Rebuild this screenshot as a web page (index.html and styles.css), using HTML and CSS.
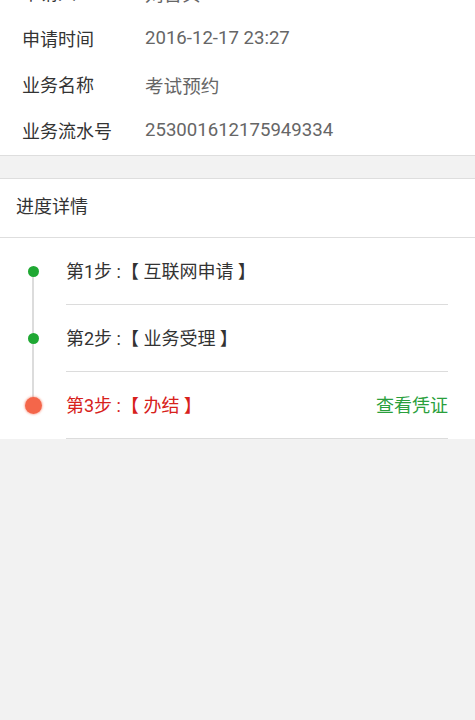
FILE: index.html
```html
<!DOCTYPE html>
<html lang="zh-CN">
<head>
    <meta charset="UTF-8">
    <meta name="viewport" content="width=device-width, initial-scale=1.0">
    <title>进度详情</title>
    <link rel="stylesheet" href="styles.css">
</head>
<body>

<div class="info">
    <div class="info-row"><span class="info-label">申请人</span><span class="info-value">刘晋贝</span></div>
    <div class="info-row"><span class="info-label">申请时间</span><span class="info-value">2016-12-17 23:27</span></div>
    <div class="info-row"><span class="info-label">业务名称</span><span class="info-value">考试预约</span></div>
    <div class="info-row"><span class="info-label">业务流水号</span><span class="info-value">253001612175949334</span></div>
</div>

<div class="progress">
    <div class="progress-title">进度详情</div>
    <div class="steps">
        <div class="step done first">
            <div class="step-mark"><span class="dot"></span></div>
            <div class="step-body"><span class="step-text">第1步 :【 互联网申请 】</span></div>
        </div>
        <div class="step done">
            <div class="step-mark"><span class="dot"></span></div>
            <div class="step-body"><span class="step-text">第2步 :【 业务受理 】</span></div>
        </div>
        <div class="step current last">
            <div class="step-mark"><span class="dot"></span></div>
            <div class="step-body">
                <span class="step-text">第3步 :【 办结 】</span>
                <a class="step-link" href="#">查看凭证</a>
            </div>
        </div>
    </div>
</div>

</body>
</html>
```

FILE: styles.css
```css
body {
    font-family: Roboto, "Noto Sans CJK SC", sans-serif;
    background-color: #f2f2f2;
    margin: 0;
    color: #333;
}
.info {
    background-color: white;
    margin-top: -31px;
    padding-bottom: 2px;
    border-bottom: 1px solid #dedede;
}
.info-row {
    display: flex;
    align-items: center;
    height: 46px;
    padding-left: 22px;
    font-size: 18px;
}
.info-label {
    width: 123px;
    color: #333;
}
.info-value {
    color: #666;
    font-size: 18.6px;
}
.progress {
    background-color: white;
    margin-top: 22px;
    border-top: 1px solid #dedede;
}
.progress-title {
    height: 58px;
    line-height: 56px;
    padding-left: 16px;
    font-size: 18px;
    border-bottom: 1px solid #dedede;
}
.step {
    display: flex;
}
.step-mark {
    width: 66px;
    position: relative;
    display: flex;
    justify-content: center;
    align-items: center;
    padding-bottom: 1px;
}
.step-mark::before {
    content: "";
    position: absolute;
    left: 32px;
    width: 2px;
    top: 0;
    bottom: 0;
    background-color: #dcdcdc;
}
.step.first .step-mark::before {
    top: 50%;
}
.step.last .step-mark::before {
    bottom: 50%;
}
.dot {
    position: relative;
    width: 11px;
    height: 11px;
    border-radius: 50%;
    background-color: #1fa833;
}
.step.current .dot {
    width: 17px;
    height: 17px;
    background-color: #f4664a;
    box-shadow: 0 0 2px 1px rgba(244, 102, 74, 0.4);
}
.step-body {
    flex: 1;
    display: flex;
    justify-content: space-between;
    align-items: center;
    height: 63px;
    padding-bottom: 3px;
    margin-right: 27px;
    border-bottom: 1px solid #dcdcdc;
    font-size: 18px;
}
.step.current .step-text {
    color: #d7211b;
}
.step-link {
    color: #2a9f3c;
    font-size: 18px;
    text-decoration: none;
}
```
